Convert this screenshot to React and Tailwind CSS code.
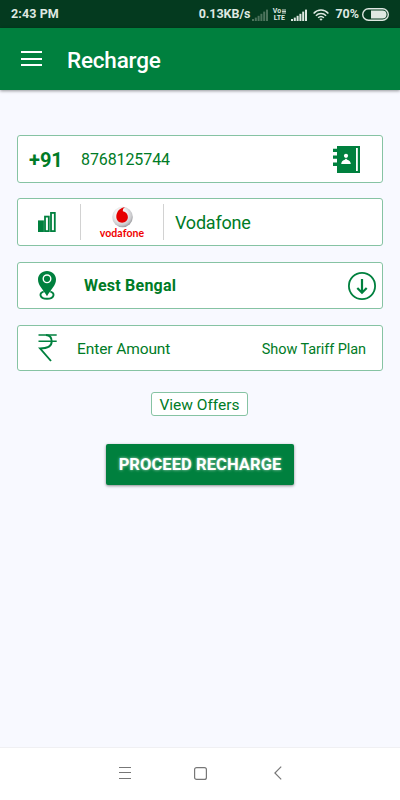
import React from "react";

const StatusBar = () => (
  <div className="flex h-[28px] items-center bg-[#043a1f] pl-[11px] pr-[11px] pt-[1px] text-[12.5px] font-bold leading-none text-[#dfe8e2]">
    <span className="tracking-[0.1px]">2:43 PM</span>
    <span className="ml-auto tracking-[-0.05px]">0.13KB/s</span>
    <SignalBars className="ml-[2px] text-[#4c735c]" />
    <div className="ml-[4px] flex h-[13px] w-[14px] flex-col items-center justify-between text-[7px] leading-[6px]">
      <span className="flex h-[6px] items-center gap-[1px]">
        Vo
        <svg width="4" height="5" viewBox="0 0 4 5" stroke="currentColor">
          <path d="M1 0 V2 M3 0 V2 M0 2.5 H4 M1 3 V5 M3 3 V5" strokeWidth="0.9" />
        </svg>
      </span>
      <span className="h-[6px]">LTE</span>
    </div>
    <SignalBars className="ml-[5px] text-[#dfe8e2]" />
    <svg className="ml-[6px]" width="16" height="12" viewBox="0 0 16 12" fill="none" stroke="currentColor" strokeWidth="1.5">
      <path d="M0.6 4.4 C4.8 0 11.2 0 15.4 4.4" />
      <path d="M2.9 6.7 C5.8 3.8 10.2 3.8 13.1 6.7" />
      <path d="M5.1 8.8 C6.8 7.2 9.2 7.2 10.9 8.8" />
      <path d="M8 11.8 L6.3 10.1 Q8 8.9 9.7 10.1 Z" fill="currentColor" stroke="none" />
    </svg>
    <span className="ml-[6px]">70%</span>
    <svg className="mb-[1px] ml-[3px]" width="27" height="13" viewBox="0 0 27 13">
      <rect x="0.7" y="0.7" width="25.6" height="11.6" rx="5.8" fill="none" stroke="currentColor" strokeWidth="1.4" />
      <path d="M9 2.5 H20.5 a4 4 0 0 1 0 8 H9 Z" fill="currentColor" />
    </svg>
  </div>
);

const SignalBars = ({ className }) => (
  <svg className={className} width="16" height="12" viewBox="0 0 16 12" fill="currentColor">
    <rect x="0" y="10" width="2" height="2" />
    <rect x="2.8" y="8.6" width="2" height="3.4" />
    <rect x="5.6" y="6.8" width="2" height="5.2" />
    <rect x="8.4" y="4.8" width="2" height="7.2" />
    <rect x="11.2" y="2.6" width="2" height="9.4" />
    <rect x="14" y="0.6" width="2" height="11.4" />
  </svg>
);

const ContactBookIcon = () => (
  <svg width="27" height="27" viewBox="0 0 27 27">
    <path d="M4 0 H27 V27 H4 V20 H0 V16.5 H4 V12.7 H0 V9.5 H4 V6 H0 V2.8 H4 Z" fill="#00803e" />
    <circle cx="13" cy="9.8" r="2.1" fill="#fff" />
    <path d="M8.2 18 C8.4 15.2 10 14.4 11.8 13.8 L13 12.4 L14.2 13.8 C16 14.4 17.6 15.2 17.8 18 Z" fill="#fff" />
    <rect x="23" y="2" width="1.8" height="23" fill="#fff" />
  </svg>
);

const NetworkIcon = () => (
  <svg width="18" height="20" viewBox="0 0 18 20" fill="none" stroke="#00803e" strokeWidth="1.8">
    <rect x="0.8" y="9.3" width="4.2" height="9.8" fill="#00803e" />
    <rect x="7" y="4.6" width="3.8" height="14.5" />
    <rect x="13" y="0.9" width="3.8" height="18.2" />
  </svg>
);

const VodafoneLogo = () => (
  <svg className="shrink-0" width="21" height="22" viewBox="0 0 21 22">
    <defs>
      <radialGradient id="ball" cx="0.42" cy="0.38" r="0.65">
        <stop offset="0.45" stopColor="#f2f2f2" />
        <stop offset="0.8" stopColor="#c9c9cc" />
        <stop offset="1" stopColor="#929296" />
      </radialGradient>
    </defs>
    <circle cx="10.5" cy="11" r="10.3" fill="url(#ball)" />
    <path d="M13.2 1.2 C10.9 1.9 10.7 3.7 10.9 5.3 C14 6 15.9 8.2 15.9 11 C15.9 14.2 13.4 16.7 10.1 16.7 C6.7 16.7 4.3 14.2 4.3 10.8 C4.3 6.1 7.6 1.4 13.2 1.2 Z" fill="#e60000" />
  </svg>
);

const PinIcon = () => (
  <svg width="18" height="29" viewBox="0 0 18 29">
    <path d="M5.7 20.6 C0.9 21.4 1 27.7 9 27.7 C17 27.7 17.1 21.4 12.3 20.6" fill="none" stroke="#00803e" strokeWidth="1.9" />
    <path d="M9 0 C3.8 0 0 3.7 0 8.5 C0 14.5 5.2 18.5 9 25.3 C12.8 18.5 18 14.5 18 8.5 C18 3.7 14.2 0 9 0 Z" fill="#00803e" />
    <circle cx="9" cy="7.8" r="3.8" fill="none" stroke="#fff" strokeWidth="1.4" />
  </svg>
);

const RupeeIcon = () => (
  <svg width="19" height="28" viewBox="0 0 19 28" fill="none" stroke="#00803e">
    <path d="M0.5 1 H18.7 M0.5 7.3 H18.7" strokeWidth="1.6" />
    <path d="M8 1 C12 1.3 13.7 4 13.7 7.4 C13.7 11.8 10.2 14.3 2 14.4 L13 27" strokeWidth="1.9" />
  </svg>
);

const DownIcon = () => (
  <svg width="28" height="28" viewBox="0 0 28 28" fill="none" stroke="#00803e">
    <circle cx="14" cy="14" r="13.1" strokeWidth="1.8" />
    <path d="M14 7 V20.5 M9.3 16 L14 20.7 L18.7 16" strokeWidth="2.2" />
  </svg>
);

const Field = ({ className, children }) => (
  <div className={"flex items-center rounded-[3px] border border-[#86c3a3] bg-white " + className}>{children}</div>
);

export default function App() {
  return (
    <div className="flex h-[800px] w-[400px] flex-col overflow-hidden bg-[#f8f9ff] font-['Roboto',sans-serif] text-[#007b26]">
      <StatusBar />
      <header className="flex h-[62px] shrink-0 items-center bg-[#00803e] pl-[21px] text-white shadow-[0_1px_3px_rgba(0,0,0,0.4)]">
        <div className="mb-[1px] flex h-[15px] w-[21px] flex-col justify-between">
          <div className="h-[2px] bg-white" />
          <div className="h-[2px] bg-white" />
          <div className="h-[2px] bg-white" />
        </div>
        <h1 className="ml-[25px] mt-[3px] text-[22.5px] font-medium leading-none tracking-[-0.2px]">Recharge</h1>
      </header>

      <main className="flex grow flex-col px-[17px] pt-[45px]">
        <Field className="h-[48px] pl-[11px] pr-[22px]">
          <span className="mt-[2px] w-[52px] text-[20px] font-bold">+91</span>
          <span className="mt-[2px] text-[16px] tracking-[-0.1px]">8768125744</span>
          <span className="ml-auto"><ContactBookIcon /></span>
        </Field>

        <Field className="mt-[15px] h-[48px] pl-[20px]">
          <NetworkIcon />
          <div className="ml-[24px] flex h-[36px] w-[84px] flex-col items-center border-x border-[#d2d2d2] pt-[2px]">
            <VodafoneLogo />
            <span className="font-['Lato',sans-serif] text-[10.5px] font-bold leading-[11px] tracking-[0.1px] text-[#f00000]">vodafone</span>
          </div>
          <span className="ml-[11px] text-[18px] tracking-[-0.2px]">Vodafone</span>
        </Field>

        <Field className="mt-[16px] h-[47px] pl-[20px] pr-[6px]">
          <PinIcon />
          <span className="ml-[28px] mt-[1px] text-[16px] font-bold tracking-[0.22px]">West Bengal</span>
          <span className="ml-auto"><DownIcon /></span>
        </Field>

        <Field className="mt-[16px] h-[46px] pl-[20px] pr-[16px]">
          <RupeeIcon />
          <span className="ml-[20px] mt-[3px] text-[15.5px] tracking-[-0.1px]">Enter Amount</span>
          <span className="ml-auto mt-[3px] text-[14.5px] tracking-[-0.08px]">Show Tariff Plan</span>
        </Field>

        <button className="mr-[1px] mt-[21px] h-[24px] w-[97px] self-center rounded-[3px] border border-[#86c3a3] bg-white pt-[3px] text-[15.5px] leading-none">
          View Offers
        </button>
        <button className="mt-[28px] h-[41px] w-[188px] self-center rounded-[2px] bg-[#00803e] pt-[2px] text-[16.5px] font-bold leading-none tracking-[0.08px] text-white shadow-[0_1px_3px_rgba(0,0,0,0.45)] [text-shadow:0_0_3px_rgba(255,255,255,0.7)]">
          PROCEED RECHARGE
        </button>
      </main>

      <nav className="flex h-[53px] shrink-0 items-center border-t border-[#f0f0f3] bg-white pb-[2px] pl-[119px] text-[#777777]">
        <svg width="12" height="12" viewBox="0 0 12 12" stroke="currentColor">
          <path d="M0 0.5 H12 M0 5.5 H12 M0 11.5 H12" />
        </svg>
        <svg className="ml-[63px]" width="13" height="13" viewBox="0 0 13 13" fill="none" stroke="currentColor">
          <rect x="0.6" y="0.6" width="11.8" height="11.8" rx="2" strokeWidth="1.2" />
        </svg>
        <svg className="ml-[67px]" width="8" height="14" viewBox="0 0 8 14" fill="none" stroke="currentColor">
          <path d="M7.2 0.6 L0.9 7 L7.2 13.4" strokeWidth="1.2" />
        </svg>
      </nav>
    </div>
  );
}
